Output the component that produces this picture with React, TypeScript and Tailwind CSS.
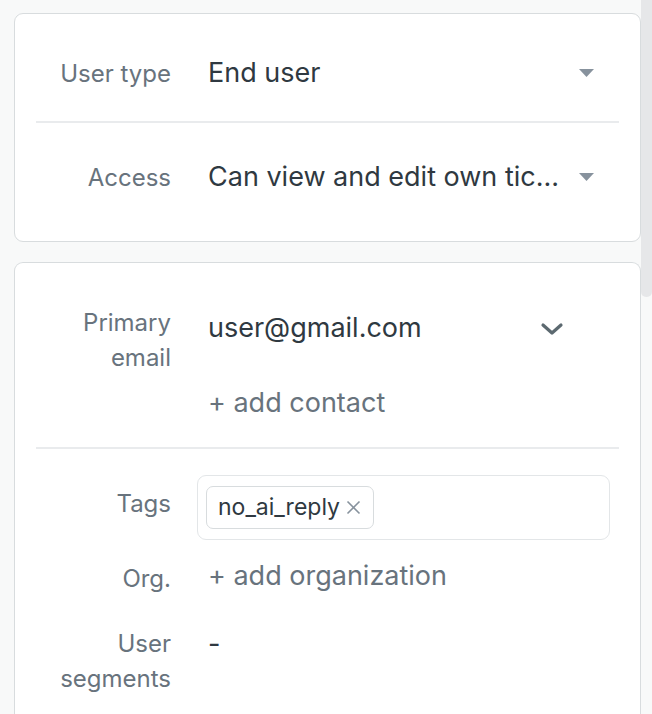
import React from 'react';

function Caret() {
  return (
    <svg width="15" height="8" viewBox="0 0 15 8" className="shrink-0">
      <path d="M0 0 H15 L7.5 8 Z" fill="#87929d" />
    </svg>
  );
}

function Chevron() {
  return (
    <svg width="24" height="14" viewBox="0 0 24 14" className="shrink-0">
      <path d="M3 3 L12 11 L21 3" fill="none" stroke="#5c6970" strokeWidth="3.2" strokeLinecap="round" strokeLinejoin="round" />
    </svg>
  );
}

function Row({ label, children, className = '', labelClass = '' }: { label: React.ReactNode; children: React.ReactNode; className?: string; labelClass?: string }) {
  return (
    <div className={`flex ${className}`}>
      <div className={`w-[135px] shrink-0 text-right text-[24px] leading-[35px] text-[#68737d] ${labelClass}`}>{label}</div>
      <div className="ml-[37px] flex-1 min-w-0">{children}</div>
    </div>
  );
}

export default function App() {
  return (
    <div className="flex h-[714px] overflow-hidden bg-[#f8f9f9]" style={{ fontFamily: 'Inter, "Liberation Sans", sans-serif' }}>
      <div className="flex-1 min-w-0 pl-[14px] pt-[13px] flex flex-col gap-[20px]">
        <div className="rounded-[9px] border-[1.5px] border-[#d8dcde] bg-white px-[21px] pt-[11px] pb-[10px]">
          <Row label="User type" className="h-[96px] items-center">
            <div className="flex items-center pr-[25px]">
              <span className="flex-1 truncate text-[27px] text-[#2f3941]">End user</span>
              <Caret />
            </div>
          </Row>
          <div className="h-[2px] bg-[#e9ebed]" />
          <Row label="Access" className="h-[108px] items-center">
            <div className="flex items-center pr-[25px]">
              <span className="flex-1 truncate text-[27px] text-[#2f3941]">Can view and edit own tic...</span>
              <Caret />
            </div>
          </Row>
        </div>

        <div className="rounded-t-[9px] border-[1.5px] border-b-0 border-[#d8dcde] bg-white px-[21px] pt-[42px] pb-[60px]">
          <Row label={<>Primary<br />email</>}>
            <div className="flex items-center pr-[55px] h-[47px]">
              <span className="flex-1 text-[27px] text-[#2f3941]">user@gmail.com</span>
              <Chevron />
            </div>
            <div className="mt-[28px] text-[27px] leading-[45px] text-[#68737d]">+ add contact</div>
          </Row>
          <div className="mt-[22px] h-[2px] bg-[#e9ebed]" />
          <Row label="Tags" className="mt-[26px] items-start" labelClass="pt-[11px]">
            <div className="-ml-[11px] mr-[9px] h-[65px] rounded-[9px] border-[1.5px] border-[#e3e6e8] px-[8px] flex items-center">
              <div className="flex h-[43px] items-center gap-[6px] rounded-[7px] border-[1.5px] border-[#d8dcde] pl-[11px] pr-[12px] text-[23px] text-[#2f3941]">
                <span>no_ai_reply</span>
                <svg width="15" height="15" viewBox="0 0 15 15">
                  <path d="M1.5 1.5 L13.5 13.5 M13.5 1.5 L1.5 13.5" stroke="#87929d" strokeWidth="1.6" />
                </svg>
              </div>
            </div>
          </Row>
          <Row label={<span className="relative top-[3px]">Org.</span>} className="mt-[13px] items-center">
            <div className="text-[27px] leading-[45px] text-[#68737d]">+ add organization</div>
          </Row>
          <Row label={<>User<br />segments</>} className="mt-[28px]">
            <div className="text-[27px] leading-[35px] text-[#2f3941]">-</div>
          </Row>
        </div>
      </div>
      <div className="w-[11px] shrink-0 bg-[#f8f9f9]">
        <div className="h-[297px] rounded-b-[5px] bg-[#e6e7e9]" />
      </div>
    </div>
  );
}
